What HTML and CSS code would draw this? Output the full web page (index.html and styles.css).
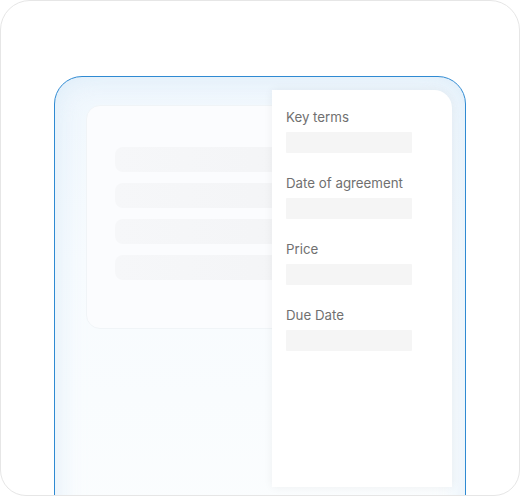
FILE: index.html
```html
<!DOCTYPE html>
<html>
<head>
<meta charset="utf-8">
<link rel="stylesheet" href="styles.css">
</head>
<body>
<div class="frame">
  <div class="panel">
    <div class="doc">
      <div class="bar"></div>
      <div class="bar"></div>
      <div class="bar"></div>
      <div class="bar"></div>
    </div>
    <div class="fields">
      <div class="field">
        <div class="label">Key terms</div>
        <div class="input"></div>
      </div>
      <div class="field">
        <div class="label">Date of agreement</div>
        <div class="input"></div>
      </div>
      <div class="field">
        <div class="label">Price</div>
        <div class="input"></div>
      </div>
      <div class="field">
        <div class="label">Due Date</div>
        <div class="input"></div>
      </div>
    </div>
  </div>
</div>
</body>
</html>
```
FILE: styles.css
```css
html, body {
  margin: 0;
  padding: 0;
  background: #ffffff;
}
body {
  font-family: Inter, "Noto Sans", sans-serif;
}
.frame {
  box-sizing: border-box;
  width: 520px;
  height: 496px;
  border: 1px solid #e6e6e6;
  border-radius: 30px 30px 26px 26px;
  overflow: hidden;
  padding-top: 75px;
  padding-left: 53px;
  background: #ffffff;
}
.panel {
  box-sizing: border-box;
  width: 412px;
  height: 460px;
  border: 1px solid #2f8ad2;
  border-radius: 28px 28px 0 0;
  background: linear-gradient(180deg, #f0f7fd 0%, #f7fbfe 40%, #fbfdfe 100%);
  box-shadow: inset 0 0 28px rgba(205, 228, 246, 0.6);
  display: grid;
  grid-template-columns: 1fr;
  grid-template-rows: auto;
  align-items: start;
}
.doc {
  grid-area: 1 / 1;
  box-sizing: border-box;
  margin: 28px 0 0 31px;
  width: 240px;
  height: 224px;
  border: 1px solid #f0f4f7;
  border-radius: 14px;
  background: #fbfcfe;
  padding: 41px 0 0 28px;
  display: flex;
  flex-direction: column;
  gap: 11px;
}
.bar {
  height: 25px;
  border-radius: 8px;
  background: linear-gradient(90deg, #f6f7f9 0%, #f3f4f6 100%);
}
.fields {
  grid-area: 1 / 1;
  justify-self: end;
  box-sizing: border-box;
  margin: 13px 13px 0 0;
  width: 180px;
  height: 397px;
  background: #ffffff;
  border-radius: 0 18px 0 0;
  box-shadow: 0 0 10px rgba(0, 0, 0, 0.06);
  padding: 19px 0 0 14px;
  display: flex;
  flex-direction: column;
  gap: 22px;
}
.label {
  font-size: 13.3px;
  line-height: 17px;
  color: #707070;
  margin-bottom: 6px;
}
.input {
  width: 126px;
  height: 21px;
  background: #f5f5f5;
  border-radius: 1px;
}
```
